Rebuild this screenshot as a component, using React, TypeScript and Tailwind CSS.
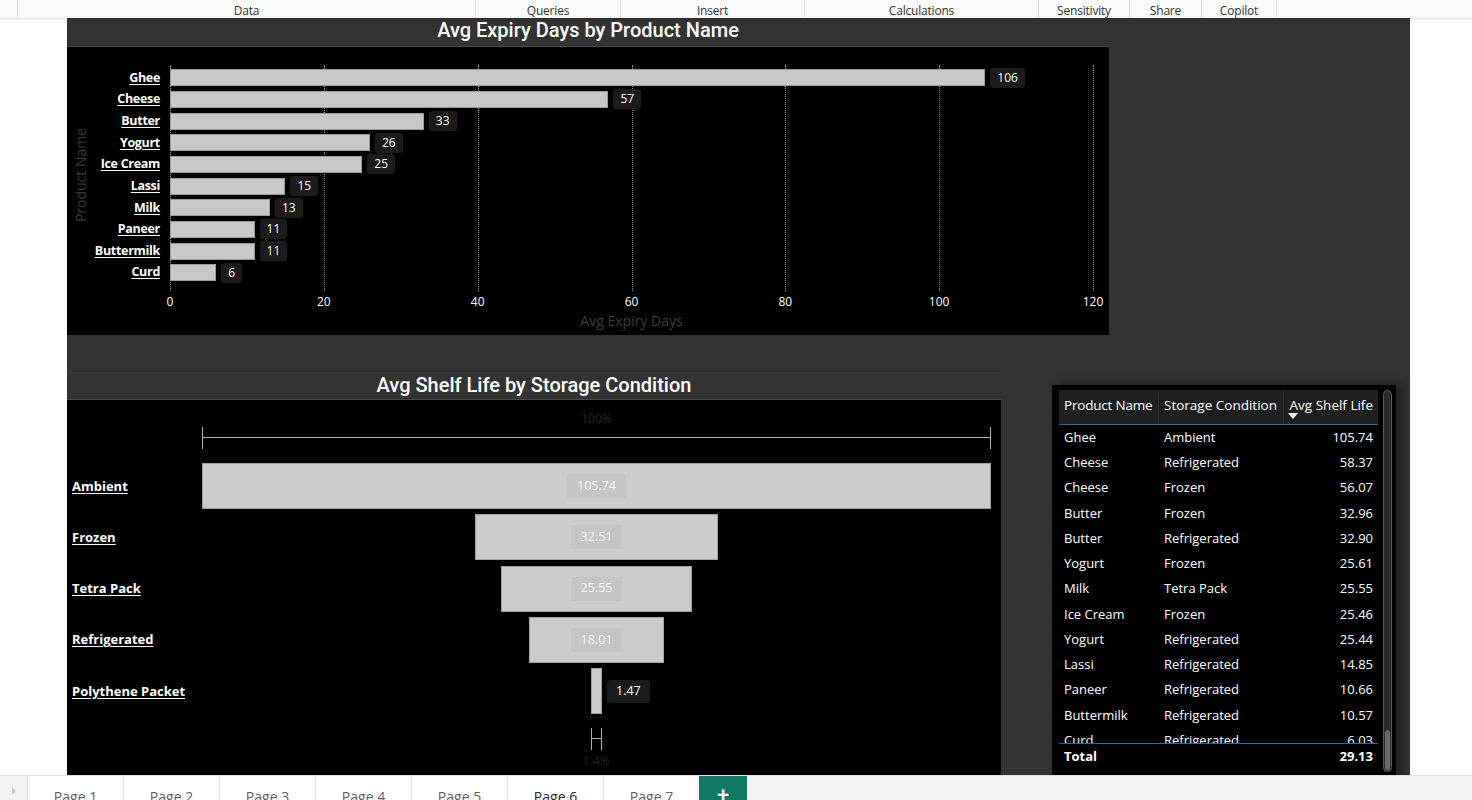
import React from 'react'

const ribbon = [
  { label: '', w: 'w-[18px]' },
  { label: 'Data', w: 'w-[458px]' },
  { label: 'Queries', w: 'w-[145px]' },
  { label: 'Insert', w: 'w-[184px]' },
  { label: 'Calculations', w: 'w-[234px]' },
  { label: 'Sensitivity', w: 'w-[91px]' },
  { label: 'Share', w: 'w-[72px]' },
  { label: 'Copilot', w: 'w-[75px]' },
]

const expiry = [
  { name: 'Ghee', v: 106 },
  { name: 'Cheese', v: 57 },
  { name: 'Butter', v: 33 },
  { name: 'Yogurt', v: 26 },
  { name: 'Ice Cream', v: 25 },
  { name: 'Lassi', v: 15 },
  { name: 'Milk', v: 13 },
  { name: 'Paneer', v: 11 },
  { name: 'Buttermilk', v: 11 },
  { name: 'Curd', v: 6 },
]

const funnel = [
  { name: 'Ambient', v: 105.74 },
  { name: 'Frozen', v: 32.51 },
  { name: 'Tetra Pack', v: 25.55 },
  { name: 'Refrigerated', v: 18.01 },
  { name: 'Polythene Packet', v: 1.47 },
]

const rows: [string, string, string][] = [
  ['Ghee', 'Ambient', '105.74'],
  ['Cheese', 'Refrigerated', '58.37'],
  ['Cheese', 'Frozen', '56.07'],
  ['Butter', 'Frozen', '32.96'],
  ['Butter', 'Refrigerated', '32.90'],
  ['Yogurt', 'Frozen', '25.61'],
  ['Milk', 'Tetra Pack', '25.55'],
  ['Ice Cream', 'Frozen', '25.46'],
  ['Yogurt', 'Refrigerated', '25.44'],
  ['Lassi', 'Refrigerated', '14.85'],
  ['Paneer', 'Refrigerated', '10.66'],
  ['Buttermilk', 'Refrigerated', '10.57'],
  ['Curd', 'Refrigerated', '6.03'],
]

const pages = ['Page 1', 'Page 2', 'Page 3', 'Page 4', 'Page 5', 'Page 6', 'Page 7']

const ticks = [0, 20, 40, 60, 80, 100, 120]
const PX = 923 / 120
const FPX = 789 / 105.74

function ExpiryChart() {
  return (
    <div className="w-[1042px] h-[317px] flex flex-col">
      {/* Title */}
      <div className="h-[29px] bg-[#333] border-b border-[#4a4a4a] flex items-center justify-center pb-[4px]">
        <span className="text-white text-[20px] font-medium leading-none" style={{ fontFamily: 'Roboto, sans-serif' }}>
          Avg Expiry Days by Product Name
        </span>
      </div>

      <div className="relative flex-1 bg-black">
        {/* gridlines */}
        <div className="absolute left-[103px] top-[18px] w-[923px] h-[226px]">
          {ticks.map((t) => (
            <div
              key={t}
              className="absolute top-0 h-full border-l border-dotted border-[#8a8a8a]"
              style={{ left: t * PX }}
            />
          ))}
        </div>

        {/* y axis title */}
        <div className="absolute left-[13px] top-[128px] -translate-x-1/2 -translate-y-1/2 -rotate-90 whitespace-nowrap text-[14px] text-[#3c3c3c]">
          Product Name
        </div>

        {/* bars */}
        <div className="relative pt-[20px] flex flex-col">
          {expiry.map((d) => (
            <div key={d.name} className="h-[21.67px] flex items-center">
              <div className="w-[93px] text-right text-white text-[12.5px] font-bold underline underline-offset-2 leading-none tracking-[-0.3px]">
                {d.name}
              </div>
              <div className="w-[10px]" />
              <div
                className="h-[17px] bg-[#c8c8c8] border border-[#9a9a9a]"
                style={{ width: d.v * PX }}
              />
              <div className="ml-[5px] h-[20px] px-[7px] rounded-[3px] bg-[#1b1b1b] text-white text-[12px] flex items-center">
                {d.v}
              </div>
            </div>
          ))}
        </div>

        {/* x axis labels */}
        <div className="absolute left-[103px] top-[246px] w-[923px] h-[16px]">
          {ticks.map((t) => (
            <span
              key={t}
              className="absolute -translate-x-1/2 text-white text-[12px]"
              style={{ left: t * PX }}
            >
              {t}
            </span>
          ))}
        </div>
        <div className="absolute left-[103px] top-[263px] w-[923px] text-center text-[14px] text-[#3c3c3c]">
          Avg Expiry Days
        </div>
      </div>
    </div>
  )
}

function FunnelChart() {
  return (
    <div className="w-[934px] h-[403px] flex flex-col">
      <div className="h-[28px] bg-[#333] border-t border-[#3d3d3d] border-b border-b-[#4a4a4a] flex items-center justify-center pb-[3px]">
        <span className="text-white text-[20px] font-medium leading-none" style={{ fontFamily: 'Roboto, sans-serif' }}>
          Avg Shelf Life by Storage Condition
        </span>
      </div>
      <div className="relative flex-1 bg-black">
        <div className="absolute left-[135px] w-[789px] top-[10px] text-center text-[12px] text-[#262626]">100%</div>
        {/* top bracket */}
        <div className="absolute left-[135px] top-[27px] w-[789px] h-[22px] border-x border-[#b0b0b0]">
          <div className="mt-[10px] h-px bg-[#b0b0b0]" />
        </div>

        <div className="pt-[63px] flex flex-col gap-[5.3px]">
          {funnel.map((d) => {
            const w = d.v * FPX
            const small = w < 60
            return (
              <div key={d.name} className="h-[46px] flex items-center">
                <div className="w-[135px] pl-[5px] text-white text-[13px] font-bold underline underline-offset-2 leading-none">
                  {d.name}
                </div>
                <div className="w-[789px] h-full flex justify-center relative">
                  <div
                    className="h-full bg-[#cbcbcb] border border-[#a0a0a0] flex items-center justify-center"
                    style={{ width: w }}
                  >
                    {!small && (
                      <span className="px-[10px] h-[24px] flex items-center bg-[#c4c4c4] text-[#f6f6f6] text-[12.5px]">
                        {d.v.toFixed(2)}
                      </span>
                    )}
                  </div>
                  {small && (
                    <span className="absolute left-[405px] top-[12px] h-[23px] px-[9px] rounded-[3px] bg-[#1b1b1b] text-white text-[12.5px] flex items-center">
                      {d.v.toFixed(2)}
                    </span>
                  )}
                </div>
              </div>
            )
          })}
        </div>

        {/* bottom bracket */}
        <div className="absolute left-[524px] top-[328px] w-[11px] h-[22px] border-x border-[#b0b0b0]">
          <div className="mt-[10px] h-px bg-[#b0b0b0]" />
        </div>
        <div className="absolute left-[135px] w-[789px] top-[352px] text-center text-[12px] text-[#262626]">1.4%</div>
      </div>
    </div>
  )
}

function ShelfTable() {
  return (
    <div className="w-[344px] h-[390px] bg-black shadow-[6px_0_10px_rgba(0,0,0,0.45)] flex pl-[7px] pt-[5px]">
      <div className="w-[319px] flex flex-col text-[13px] text-white" style={{ fontFamily: '"Open Sans", sans-serif' }}>
        <div className="h-[35px] bg-[#1f1f1f] border-b border-[#2c6aa8] flex text-[13.5px]">
          <div className="w-[100px] pl-[5px] pt-[5px] border-r border-[#2e2e2e] whitespace-nowrap tracking-[-0.2px]">Product Name</div>
          <div className="w-[125px] pl-[5px] pt-[5px] border-r border-[#2e2e2e] whitespace-nowrap">Storage Condition</div>
          <div className="flex-1 pr-[5px] pt-[5px] text-right whitespace-nowrap relative">
            Avg Shelf Life
            <span className="absolute left-[4px] top-[23px] w-0 h-0 border-x-[5px] border-x-transparent border-t-[6px] border-t-white" />
          </div>
        </div>
        <div className="h-[319px] overflow-hidden border-b border-[#2c6aa8]">
          {rows.map((r, i) => (
            <div key={i} className="h-[25.25px] flex items-center">
              <div className="w-[100px] pl-[5px] whitespace-nowrap">{r[0]}</div>
              <div className="w-[125px] pl-[5px] whitespace-nowrap">{r[1]}</div>
              <div className="flex-1 pr-[5px] text-right">{r[2]}</div>
            </div>
          ))}
        </div>
        <div className="h-[26px] flex items-center font-bold">
          <div className="w-[225px] pl-[5px]">Total</div>
          <div className="flex-1 pr-[5px] text-right">29.13</div>
        </div>
      </div>
      {/* scrollbar */}
      <div className="ml-[5px] w-[9px] h-[382px] rounded-full border border-[#5a5a5a] bg-[#2a2a2a] p-px flex flex-col justify-end">
        <div className="h-[40px] rounded-full bg-[#6a6a6a]" />
      </div>
    </div>
  )
}

export default function App() {
  return (
    <div className="w-[1472px] h-[800px] overflow-hidden bg-white flex flex-col" style={{ fontFamily: '"Open Sans", sans-serif' }}>
      {/* Ribbon tabs */}
      <div className="h-[18px] bg-[#fafafa] flex shadow-[0_1px_2px_rgba(0,0,0,0.15)] relative z-10">
        {ribbon.map((r, i) => (
          <div
            key={i}
            className={`${r.w} h-full border-r border-[#e3e3e3] flex items-center justify-center pt-[3px] text-[12px] text-[#333] leading-none tracking-[-0.2px]`}
          >
            {r.label}
          </div>
        ))}
      </div>

      {/* Report area */}
      <div className="h-[757px] flex">
        <div className="w-[67px] bg-white" />
        <div className="w-[1343px] bg-[#333] flex flex-col">
          <ExpiryChart />
          <div className="h-[37px]" />
          <div className="flex flex-1">
            <FunnelChart />
            <div className="ml-[51px] mt-[13px]">
              <ShelfTable />
            </div>
          </div>
        </div>
        <div className="flex-1 bg-white" />
      </div>

      {/* Page tabs */}
      <div className="h-[25px] bg-[#f3f2f1] flex border-t border-[#e1dfdd]">
        <div className="w-[27px] flex items-center justify-center">
          <span className="w-0 h-0 border-y-[4px] border-y-transparent border-l-[4px] border-l-[#c8c6c4] mt-[6px]" />
        </div>
        {pages.map((p) => (
          <div
            key={p}
            className={`w-[96px] h-full bg-white border-l border-[#e1dfdd] flex justify-center pt-[11px] text-[14px] leading-[20px] ${
              p === 'Page 6' ? 'text-[#252423]' : 'text-[#605e5c]'
            }`}
          >
            {p}
          </div>
        ))}
        <div className="w-[48px] h-full bg-[#117865] flex justify-center pt-[7px] text-white text-[22px] font-bold leading-[20px]">
          +
        </div>
      </div>
    </div>
  )
}
